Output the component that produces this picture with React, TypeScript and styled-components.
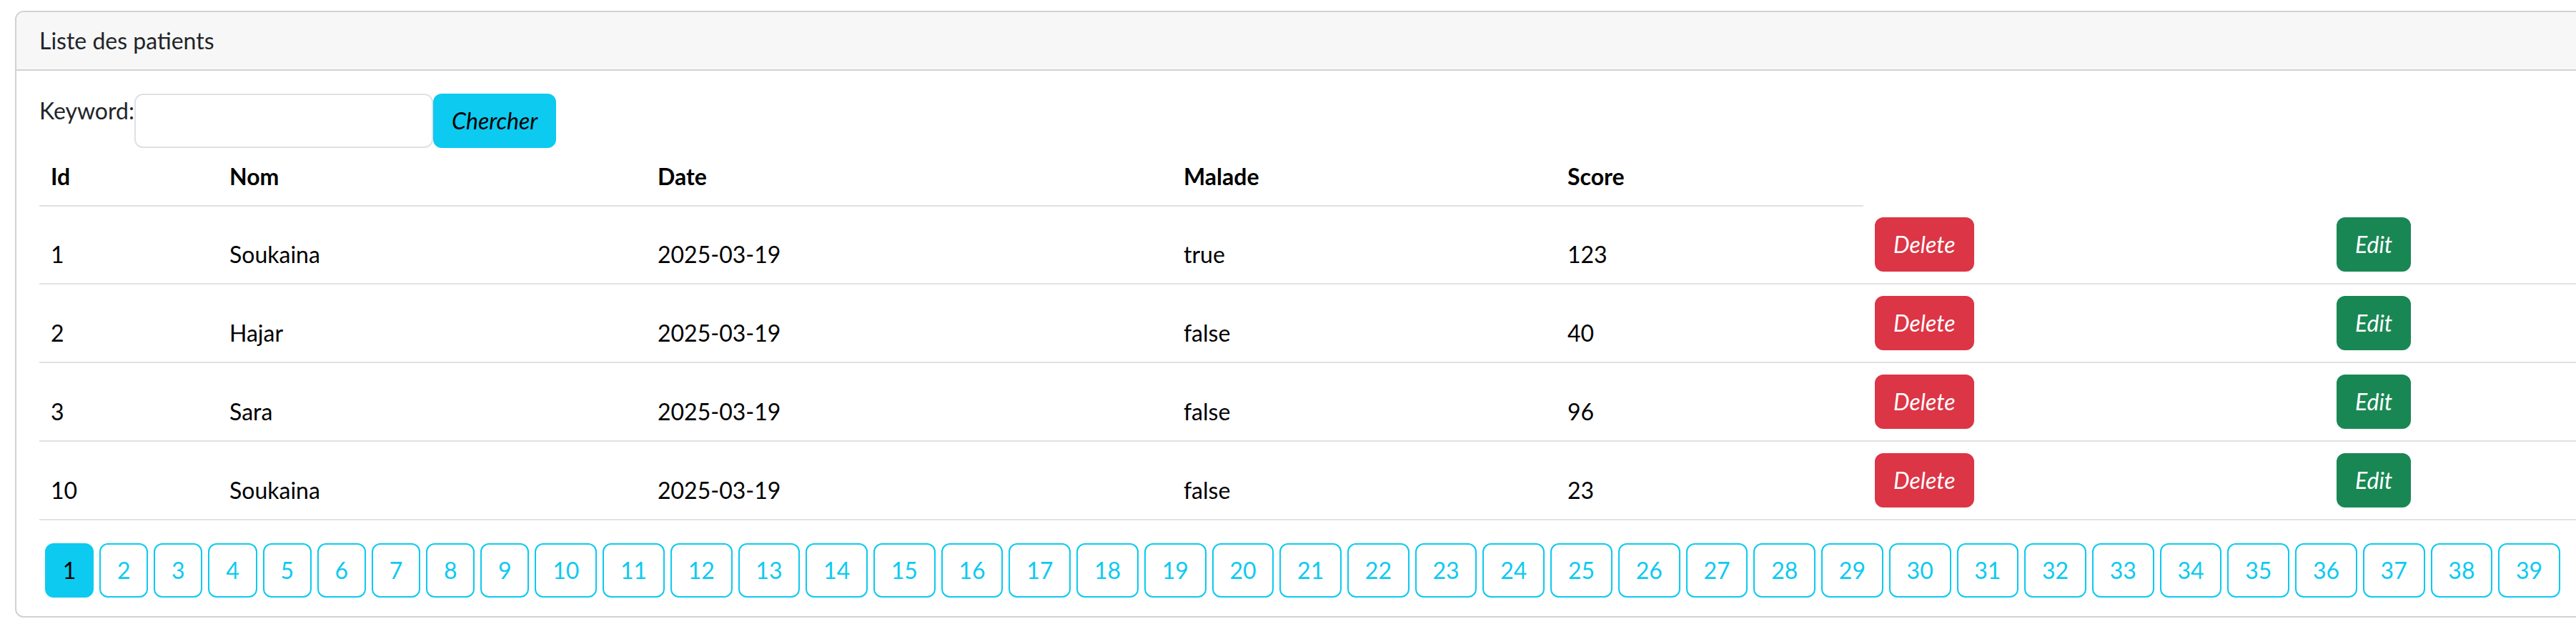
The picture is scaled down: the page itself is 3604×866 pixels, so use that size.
import React from 'react';
import styled, { createGlobalStyle } from 'styled-components';

const GlobalStyle = createGlobalStyle`
  * {
    box-sizing: border-box;
  }
  html, body {
    margin: 0;
    padding: 0;
    overflow: hidden;
    background: #fff;
  }
  body {
    font-family: "Segoe UI", Lato, "Liberation Sans", sans-serif;
    font-size: 32px;
    line-height: 48px;
    color: #212529;
  }
`;

const Page = styled.div`
    padding: 15px 0 0 21px;
    width: max-content;
`;

const Card = styled.div`
    width: 3800px;
    border: 2px solid #d2d2d2;
    border-radius: 12px;
    overflow: hidden;
    background: #fff;
`;

const CardHeader = styled.div`
    padding: 16px 32px;
    background: #f7f7f7;
    border-bottom: 2px solid #d2d2d2;
    line-height: 48px;
`;

const CardBody = styled.div`
    padding: 32px 32px 26px;
`;

const SearchForm = styled.form`
    display: flex;
    align-items: flex-start;
    margin: 0;
`;

const Label = styled.label`
    line-height: 48px;
`;

const SearchInput = styled.input`
    width: 418px;
    height: 76px;
    border: 2px solid #dee2e6;
    border-radius: 12px;
    padding: 12px 24px;
    font: inherit;
    outline: none;
`;

const colors = {
    info: { bg: '#0dcaf0', fg: '#000' },
    danger: { bg: '#dc3545', fg: '#fff' },
    success: { bg: '#198754', fg: '#fff' },
};

const Button = styled.button<{ $variant: 'info' | 'danger' | 'success' }>`
    display: inline-block;
    vertical-align: top;
    padding: 12px 24px;
    border: 2px solid ${p => colors[p.$variant].bg};
    border-radius: 12px;
    background: ${p => colors[p.$variant].bg};
    color: ${p => colors[p.$variant].fg};
    font-family: inherit;
    font-size: 32px;
    line-height: 48px;
    font-style: italic;
    cursor: pointer;
`;

const Table = styled.table`
    table-layout: fixed;
    width: 3708px;
    border-collapse: collapse;
    margin-bottom: 32px;
    color: #000;

    th {
        text-align: left;
        font-weight: 700;
        padding: 16px;
        line-height: 48px;
        border-bottom: 2px solid #dee2e6;
    }

    td {
        padding: 16px;
        line-height: 48px;
        vertical-align: bottom;
        border-bottom: 2px solid #dee2e6;
    }
`;

const Pagination = styled.div`
    display: flex;
`;

const PageButton = styled.button<{ $active?: boolean }>`
    flex-shrink: 0;
    margin-left: 8px;
    padding: 12px 22.8px;
    border: 2px solid #0dcaf0;
    border-radius: 12px;
    background: ${p => (p.$active ? '#0dcaf0' : '#fff')};
    color: ${p => (p.$active ? '#000' : '#0dcaf0')};
    font-family: inherit;
    font-size: 32px;
    line-height: 48px;
    cursor: pointer;
`;

const columns = [250, 599, 736, 537, 430, 646, 510];

const patients = [
    { id: 1, nom: 'Soukaina', date: '2025-03-19', malade: true, score: 123 },
    { id: 2, nom: 'Hajar', date: '2025-03-19', malade: false, score: 40 },
    { id: 3, nom: 'Sara', date: '2025-03-19', malade: false, score: 96 },
    { id: 10, nom: 'Soukaina', date: '2025-03-19', malade: false, score: 23 },
];

const pages = Array.from({ length: 39 }, (_, i) => i + 1);

export default function App() {
    return (
        <Page>
            <GlobalStyle />
            <Card>
                <CardHeader>Liste des patients</CardHeader>
                <CardBody>
                    <SearchForm onSubmit={e => e.preventDefault()}>
                        <Label>Keyword:</Label>
                        <SearchInput type="text" name="keyword" />
                        <Button $variant="info" type="submit">Chercher</Button>
                    </SearchForm>

                    <Table>
                        <colgroup>
                            {columns.map((w, i) => (
                                <col key={i} style={{ width: w }} />
                            ))}
                        </colgroup>
                        <thead>
                            <tr>
                                <th>Id</th>
                                <th>Nom</th>
                                <th>Date</th>
                                <th>Malade</th>
                                <th>Score</th>
                            </tr>
                        </thead>
                        <tbody>
                            {patients.map(p => (
                                <tr key={p.id}>
                                    <td>{p.id}</td>
                                    <td>{p.nom}</td>
                                    <td>{p.date}</td>
                                    <td>{String(p.malade)}</td>
                                    <td>{p.score}</td>
                                    <td><Button $variant="danger">Delete</Button></td>
                                    <td><Button $variant="success">Edit</Button></td>
                                </tr>
                            ))}
                        </tbody>
                    </Table>

                    <Pagination>
                        {pages.map(n => (
                            <PageButton key={n} $active={n === 1}>{n}</PageButton>
                        ))}
                    </Pagination>
                </CardBody>
            </Card>
        </Page>
    );
}
